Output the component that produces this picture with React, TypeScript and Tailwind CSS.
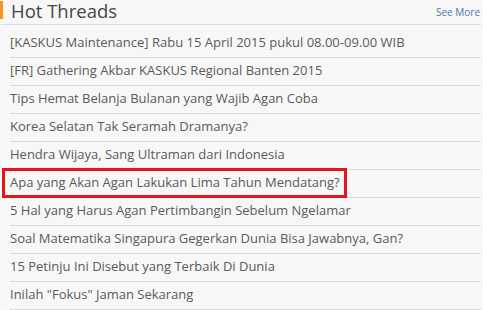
import React from "react";

const threads = [
  "[KASKUS Maintenance] Rabu 15 April 2015 pukul 08.00-09.00 WIB",
  "[FR] Gathering Akbar KASKUS Regional Banten 2015",
  "Tips Hemat Belanja Bulanan yang Wajib Agan Coba",
  "Korea Selatan Tak Seramah Dramanya?",
  "Hendra Wijaya, Sang Ultraman dari Indonesia",
  "Apa yang Akan Agan Lakukan Lima Tahun Mendatang?",
  "5 Hal yang Harus Agan Pertimbangin Sebelum Ngelamar",
  "Soal Matematika Singapura Gegerkan Dunia Bisa Jawabnya, Gan?",
  "15 Petinju Ini Disebut yang Terbaik Di Dunia",
  "Inilah \"Fokus\" Jaman Sekarang",
];

export default function App() {
  return (
    <div
      className="w-[483px] h-[310px] overflow-hidden bg-[#f7f7f7] relative"
      style={{ fontFamily: '"Open Sans", "Noto Sans", sans-serif' }}
    >
      <div className="flex items-end justify-between h-[25px] ml-px mr-[2px] border-b border-[#dcdcdc]">
        <div className="flex items-start h-[24px]">
          <div className="w-[3px] h-[18px] bg-[#f7941d] -ml-px mt-[1px]" />
          <span className="ml-[8px] text-[18.5px] leading-[22px] text-[#464646]">Hot Threads</span>
        </div>
        <span className="text-[10px] leading-[14px] text-[#4f79a8] mb-[5px] mr-[1px]">See More</span>
      </div>
      <div className="mt-[5px] ml-[10px] mr-[2px]">
        {threads.map((t, i) => (
          <div
            key={i}
            className="h-[28px] border-b border-[#dcdcdc] flex items-center text-[13px] text-[#5a5a5a] relative"
          >
            <span className="mt-[-1px]">{t}</span>
            {i === 5 && (
              <div className="absolute left-[-8px] top-[-2px] w-[345px] h-[30px] border-[3px] border-[#e3141b]" />
            )}
          </div>
        ))}
      </div>
    </div>
  );
}
